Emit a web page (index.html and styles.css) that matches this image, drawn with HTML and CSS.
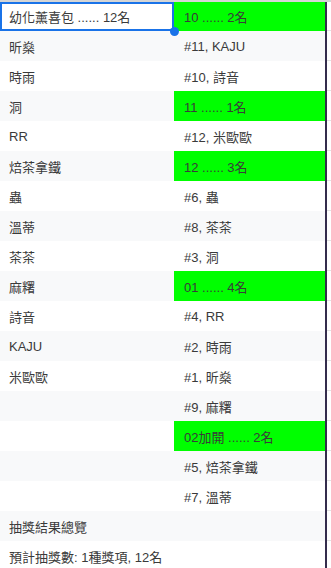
FILE: index.html
```html
<!DOCTYPE html>
<html lang="zh-Hant">
<head>
<meta charset="utf-8">
<link rel="stylesheet" href="styles.css">
</head>
<body>
<div class="topbar"></div>
<div class="sheet">
  <div class="row first"><div class="cell a selected">幼化薰喜包 ...... 12名<span class="handle"></span></div><div class="cell b hit">10 ...... 2名</div><div class="divider"></div><div class="cell c"></div></div>
  <div class="row alt"><div class="cell a">昕燊</div><div class="cell b">#11, KAJU</div><div class="divider"></div><div class="cell c"></div></div>
  <div class="row"><div class="cell a">時雨</div><div class="cell b">#10, 詩音</div><div class="divider"></div><div class="cell c"></div></div>
  <div class="row alt"><div class="cell a">洞</div><div class="cell b hit">11 ...... 1名</div><div class="divider"></div><div class="cell c"></div></div>
  <div class="row"><div class="cell a">RR</div><div class="cell b">#12, 米歐歐</div><div class="divider"></div><div class="cell c"></div></div>
  <div class="row alt"><div class="cell a">焙茶拿鐵</div><div class="cell b hit">12 ...... 3名</div><div class="divider"></div><div class="cell c"></div></div>
  <div class="row"><div class="cell a">蟲</div><div class="cell b">#6, 蟲</div><div class="divider"></div><div class="cell c"></div></div>
  <div class="row alt"><div class="cell a">溫蒂</div><div class="cell b">#8, 茶茶</div><div class="divider"></div><div class="cell c"></div></div>
  <div class="row"><div class="cell a">茶茶</div><div class="cell b">#3, 洞</div><div class="divider"></div><div class="cell c"></div></div>
  <div class="row alt"><div class="cell a">麻糬</div><div class="cell b hit">01 ...... 4名</div><div class="divider"></div><div class="cell c"></div></div>
  <div class="row"><div class="cell a">詩音</div><div class="cell b">#4, RR</div><div class="divider"></div><div class="cell c"></div></div>
  <div class="row alt"><div class="cell a">KAJU</div><div class="cell b">#2, 時雨</div><div class="divider"></div><div class="cell c"></div></div>
  <div class="row"><div class="cell a">米歐歐</div><div class="cell b">#1, 昕燊</div><div class="divider"></div><div class="cell c"></div></div>
  <div class="row alt"><div class="cell a"></div><div class="cell b">#9, 麻糬</div><div class="divider"></div><div class="cell c"></div></div>
  <div class="row"><div class="cell a"></div><div class="cell b hit">02加開 ...... 2名</div><div class="divider"></div><div class="cell c"></div></div>
  <div class="row alt"><div class="cell a"></div><div class="cell b">#5, 焙茶拿鐵</div><div class="divider"></div><div class="cell c"></div></div>
  <div class="row"><div class="cell a"></div><div class="cell b">#7, 溫蒂</div><div class="divider"></div><div class="cell c"></div></div>
  <div class="row alt"><div class="cell a">抽獎結果總覽</div><div class="cell b"></div><div class="divider"></div><div class="cell c"></div></div>
  <div class="row"><div class="cell a">預計抽獎數: 1種獎項, 12名</div><div class="cell b"></div><div class="divider"></div><div class="cell c"></div></div>
</div>
</body>
</html>
```

FILE: styles.css
```css
* { box-sizing: border-box; }
html, body {
  margin: 0;
  padding: 0;
  background: #ffffff;
  overflow: hidden;
}
body {
  width: 331px;
  height: 568px;
  font-family: "Liberation Sans", Arial, "Noto Sans CJK TC", sans-serif;
  font-size: 13px;
  color: #3a3a3a;
}
.topbar {
  height: 2px;
  background: #d5d5d5;
}
.sheet {
  display: flex;
  flex-direction: column;
}
.row {
  display: grid;
  grid-template-columns: 174px 151px 2px 1fr;
  height: 30px;
  flex: none;
  background: #ffffff;
}
.row.first { height: 29px; }
.row.alt { background: #f8f9fa; }
.cell {
  display: flex;
  align-items: center;
  padding: 0 10px;
  white-space: nowrap;
  position: relative;
}
.cell.a { padding-left: 9px; }
.cell.hit { background: #00ff00; }
.divider { background: #342c4c; }
.cell.c {
  padding: 0;
  background: #ffffff;
  border-bottom: 1px solid #e2e3e3;
}
.cell.selected {
  box-shadow: inset 0 0 0 2px #1a73e8;
  background: #ffffff;
}
.handle {
  position: absolute;
  right: -5px;
  bottom: -5px;
  width: 9px;
  height: 9px;
  border-radius: 50%;
  background: #1a73e8;
  z-index: 2;
}
```
